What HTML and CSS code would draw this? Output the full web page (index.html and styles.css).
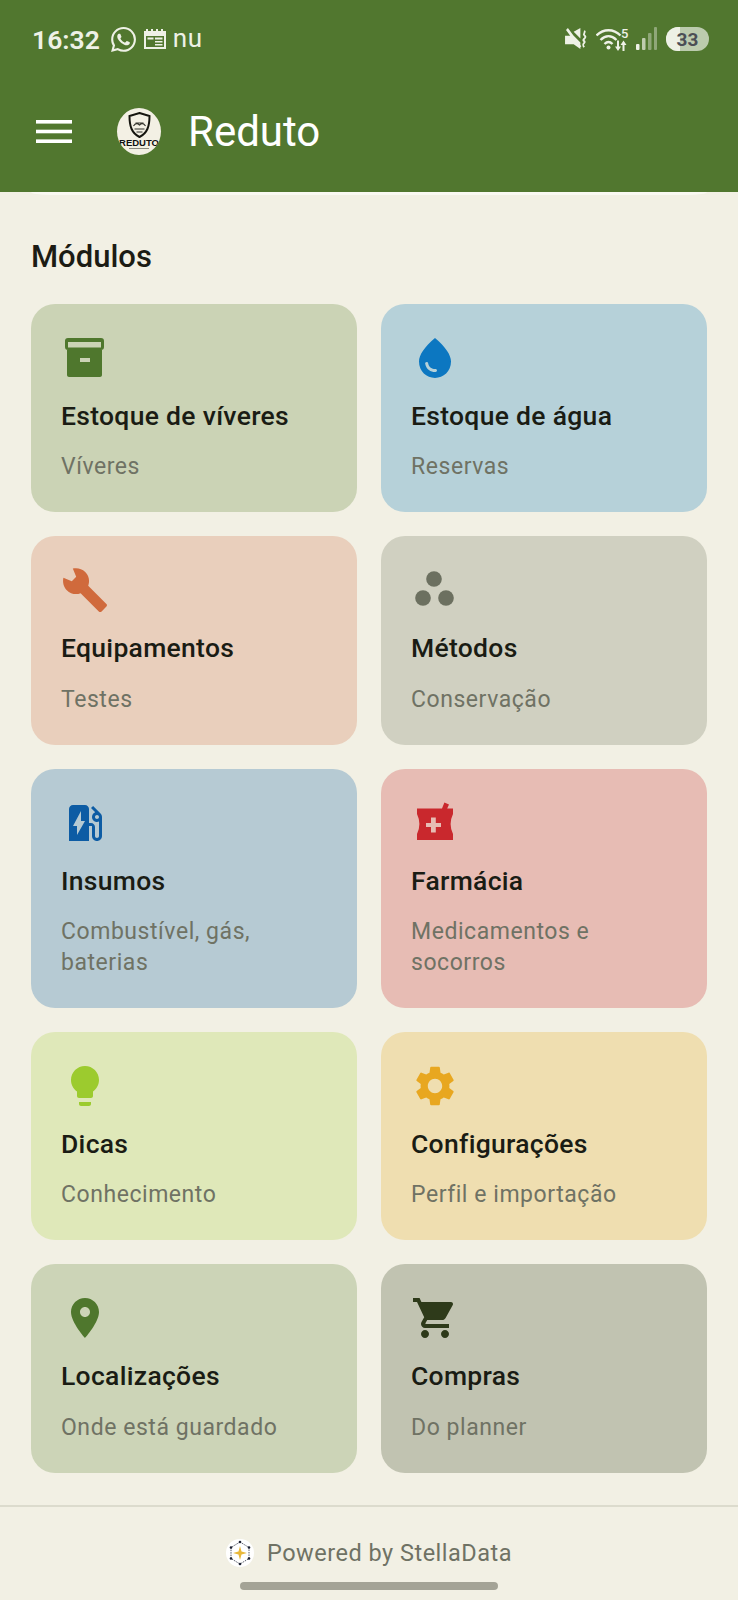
FILE: index.html
```html
<!DOCTYPE html>
<html lang="pt-BR">
<head>
  <meta charset="utf-8">
  <title>Reduto</title>
  <link rel="stylesheet" href="styles.css">
</head>
<body>
  <div class="page">
    <header class="topo">
      <div class="status">
        <div class="status-esq">
          <span class="hora">16:32</span>
          <svg class="ic-whats" viewBox="0 0 24 24"><path d="M17.472 14.382c-.297-.149-1.758-.867-2.03-.967-.273-.099-.471-.148-.67.15-.197.297-.767.966-.94 1.164-.173.199-.347.223-.644.075-.297-.15-1.255-.463-2.39-1.475-.883-.788-1.48-1.761-1.653-2.059-.173-.297-.018-.458.13-.606.134-.133.298-.347.446-.52.149-.174.198-.298.298-.497.099-.198.05-.371-.025-.52-.075-.149-.669-1.612-.916-2.207-.242-.579-.487-.5-.669-.51-.173-.008-.371-.01-.57-.01-.198 0-.52.074-.792.372-.272.297-1.04 1.016-1.04 2.479 0 1.462 1.065 2.875 1.213 3.074.149.198 2.096 3.2 5.077 4.487.709.306 1.262.489 1.694.625.712.227 1.36.195 1.871.118.571-.085 1.758-.719 2.006-1.413.248-.694.248-1.289.173-1.413-.074-.124-.272-.198-.57-.347m-5.421 7.403h-.004a9.87 9.87 0 01-5.031-1.378l-.361-.214-3.741.982.998-3.648-.235-.374a9.86 9.86 0 01-1.51-5.26c.001-5.45 4.436-9.884 9.888-9.884 2.64 0 5.122 1.03 6.988 2.898a9.825 9.825 0 012.893 6.994c-.003 5.45-4.437 9.884-9.885 9.884m8.413-18.297A11.815 11.815 0 0012.05 0C5.495 0 .16 5.335.157 11.892c0 2.096.547 4.142 1.588 5.945L.057 24l6.305-1.654a11.882 11.882 0 005.683 1.448h.005c6.554 0 11.89-5.335 11.893-11.893a11.821 11.821 0 00-3.48-8.413z"/></svg>
          <svg class="ic-cal" viewBox="0 0 22 20"><path fill-rule="evenodd" d="M0 2h2V0h2v2h3V0h2v2h3V0h2v2h3V0h2v2h3v18H0zM2 7v11h18V7z"/><path d="M3.5 8.5h6v2h-6zM11 8.5h7.5v2H11zM11 12h7.5v1.5H11zM11 15h7.5v1.5H11z"/></svg>
          <span class="nu">nu</span>
        </div>
        <div class="status-dir">
          <svg class="ic-mudo" viewBox="0 0 26 24"><path d="M0 8h5l2-2 9 9v7l-7-5H0zM9 4l7-4v11zM1 2l2-2 14 19-2 2z"/><path class="linha" d="M20 3c2 1.5-1.5 3 0 4.5s2 2-.2 4 2 2.2.2 4-1.5 2.5 0 4.5"/></svg>
          <svg class="ic-wifi" viewBox="0 0 34 24"><path class="arco" d="M.5 8.5C7.5 1.5 17.5 1.5 24.5 8.5M4.5 13c5-5 11-5 16 0M8.5 17c2.5-2.5 5.5-2.5 8 0"/><circle cx="12.5" cy="20.5" r="2"/><text x="25" y="11" class="cinco">5</text><path d="M21 13.5h2v6h2l-3 4.5-3-4.5h2zM27.5 13.5l3 4.500h-2v6h-2v-6h-2z"/></svg>
          <svg class="ic-sinal" viewBox="0 0 22 24"><rect x="0" y="17" width="3.5" height="6" rx="1"/><rect class="meio" x="6" y="11" width="3.5" height="12" rx="1"/><rect class="apagado" x="12" y="6" width="3.5" height="17" rx="1"/><rect class="apagado" x="18" y="0" width="3" height="23" rx="1"/></svg>
          <div class="bateria"><div class="bateria-nivel"></div><span class="bateria-num">33</span></div>
        </div>
      </div>
      <div class="appbar">
        <svg class="ic-menu" viewBox="0 0 36 23"><rect y="0" width="36" height="3.6"/><rect y="9.7" width="36" height="3.6"/><rect y="19.4" width="36" height="3.6"/></svg>
        <div class="logo">
          <svg class="logo-escudo" viewBox="0 0 24 26"><path fill="#f3f0e4" stroke="#15150f" stroke-width="2" d="M12 1l10 3c0 10-2 17-10 21C4 21 2 14 2 4z"/><path fill="none" stroke="#33332c" stroke-width="1.2" d="M6 14c2-3 4-3 6-1 2-2 4-2 6 1M7 17h10M9 20h6M8 11h8"/></svg>
          <span class="logo-nome">REDUTO</span>
          <span class="logo-linha"></span>
        </div>
        <span class="titulo">Reduto</span>
      </div>
    </header>
    <div class="resto-card"></div>

    <main class="conteudo">
      <h2 class="secao">Módulos</h2>
      <div class="grade">
        <div class="card c-viveres">
          <svg class="icone" viewBox="0 0 24 24" fill="#4f772d"><path fill-rule="evenodd" d="M3.5 2H20a1.5 1.5 0 0 1 1.5 1.5v3A1.5 1.5 0 0 1 20 8H3.5A1.5 1.5 0 0 1 2 6.5v-3A1.5 1.5 0 0 1 3.5 2zM3.5 4v2.8H20V4zM3 8h17.5v12.5c0 .5-.5 1-1 1H4c-.5 0-1-.5-1-1zM9.5 12v2h5v-2z"/></svg>
          <div class="card-titulo">Estoque de víveres</div>
          <div class="card-sub">Víveres</div>
        </div>
        <div class="card c-agua">
          <svg class="icone" viewBox="0 0 24 24" fill="#0c77c1"><path d="M12 2c-5.33 4.55-8 8.48-8 11.8 0 4.98 3.8 8.2 8 8.2s8-3.22 8-8.2c0-3.32-2.67-7.25-8-11.8zM7.83 14c.37 0 .67.26.74.62.41 2.22 2.28 2.98 3.64 2.87.43-.02.79.32.79.75 0 .4-.32.73-.72.75-2.13.13-4.62-1.09-5.19-4.12-.08-.45.28-.87.74-.87z"/></svg>
          <div class="card-titulo">Estoque de água</div>
          <div class="card-sub">Reservas</div>
        </div>
        <div class="card c-equip">
          <svg class="icone" viewBox="0 0 24 24" fill="#d06a3c"><path d="M22.7 19l-9.1-9.1c.9-2.3.4-5-1.5-6.9-1.7-1.7-4-2.2-6.2-1.7L7.6 5.4 5.4 7.6 1.2 5.9C.7 8.1 1.3 10.5 2.9 12.1c1.9 1.9 4.6 2.4 6.9 1.5l9.1 9.1c.4.4 1 .4 1.4 0l2.3-2.3c.5-.4.5-1.1.1-1.4z"/></svg>
          <div class="card-titulo">Equipamentos</div>
          <div class="card-sub">Testes</div>
        </div>
        <div class="card c-metodos">
          <svg class="icone" viewBox="0 0 24 24" fill="#6c7060"><circle cx="11.5" cy="6.5" r="3.9"/><circle cx="6" cy="16" r="3.9"/><circle cx="17.5" cy="16" r="3.9"/></svg>
          <div class="card-titulo">Métodos</div>
          <div class="card-sub">Conservação</div>
        </div>
        <div class="card c-insumos">
          <svg class="icone" viewBox="0 0 24 24" fill="#0d5ca4"><path d="M19.77 7.23l.01-.01-3.72-3.72L15 4.56l2.11 2.11c-.94.36-1.61 1.26-1.61 2.33 0 1.38 1.12 2.5 2.5 2.5.36 0 .69-.08 1-.21v7.21c0 .55-.45 1-1 1s-1-.45-1-1V14c0-1.1-.9-2-2-2h-1V5c0-1.1-.9-2-2-2H6c-1.1 0-2 .9-2 2v16h10v-7.5h1.5v5c0 1.38 1.12 2.5 2.5 2.5s2.5-1.12 2.5-2.5V9c0-.69-.28-1.32-.73-1.77zM18 10c-.55 0-1-.45-1-1s.45-1 1-1 1 .45 1 1-.45 1-1 1zM8 18v-4.5H6L10 6v5h2l-4 7z"/></svg>
          <div class="card-titulo">Insumos</div>
          <div class="card-sub">Combustível, gás, baterias</div>
        </div>
        <div class="card c-farmacia">
          <svg class="icone" viewBox="0 0 24 24" fill="#c9282d"><path fill-rule="evenodd" d="M3 4.7h12.5l1.2-2.9 2.3.9-.9 2H21v2.8Q18.6 12.5 21 17.5v3H3v-3Q5.4 12.5 3 7.5zM10 9.3V12H7.5v2H10v2.8h2.4V14H15v-2h-2.6V9.3z"/></svg>
          <div class="card-titulo">Farmácia</div>
          <div class="card-sub">Medicamentos e socorros</div>
        </div>
        <div class="card c-dicas">
          <svg class="icone" viewBox="0 0 24 24" fill="#9ccb2e"><path d="M9 21c0 .55.45 1 1 1h4c.55 0 1-.45 1-1v-1H9v1zm3-19C8.14 2 5 5.14 5 9c0 2.38 1.19 4.47 3 5.74V17c0 .55.45 1 1 1h6c.55 0 1-.45 1-1v-2.26c1.81-1.27 3-3.36 3-5.74 0-3.86-3.14-7-7-7z"/></svg>
          <div class="card-titulo">Dicas</div>
          <div class="card-sub">Conhecimento</div>
        </div>
        <div class="card c-config">
          <svg class="icone" viewBox="0 0 24 24" fill="#e8a720"><path d="M19.14 12.94c.04-.3.06-.61.06-.94 0-.32-.02-.64-.07-.94l2.03-1.58c.18-.14.23-.41.12-.61l-1.92-3.32c-.12-.22-.37-.29-.59-.22l-2.39.96c-.5-.38-1.03-.7-1.62-.94L14.4 2.81c-.04-.24-.24-.41-.48-.41h-3.84c-.24 0-.43.17-.47.41L9.25 5.35c-.59.24-1.13.57-1.62.94L5.24 5.33c-.22-.08-.47 0-.59.22L2.74 8.87c-.12.21-.08.47.12.61l2.03 1.58c-.05.3-.09.63-.09.94s.02.64.07.94l-2.03 1.58c-.18.14-.23.41-.12.61l1.92 3.32c.12.22.37.29.59.22l2.39-.96c.5.38 1.03.7 1.62.94l.36 2.54c.05.24.24.41.48.41h3.84c.24 0 .44-.17.47-.41l.36-2.54c.59-.24 1.13-.56 1.62-.94l2.39.96c.22.08.47 0 .59-.22l1.92-3.32c.12-.22.07-.47-.12-.61l-2.01-1.58zM12 15.6c-1.98 0-3.6-1.62-3.6-3.6s1.62-3.6 3.6-3.6 3.6 1.62 3.6 3.6-1.62 3.6-3.6 3.6z"/></svg>
          <div class="card-titulo">Configurações</div>
          <div class="card-sub">Perfil e importação</div>
        </div>
        <div class="card c-local">
          <svg class="icone" viewBox="0 0 24 24" fill="#4f772d"><path d="M12 2C8.13 2 5 5.13 5 9c0 5.25 7 13 7 13s7-7.75 7-13c0-3.87-3.13-7-7-7zm0 9.5c-1.38 0-2.5-1.12-2.5-2.5s1.12-2.5 2.5-2.5 2.5 1.12 2.5 2.5-1.12 2.5-2.5 2.5z"/></svg>
          <div class="card-titulo">Localizações</div>
          <div class="card-sub">Onde está guardado</div>
        </div>
        <div class="card c-compras">
          <svg class="icone" viewBox="0 0 24 24" fill="#2e3a1a"><path d="M7 18c-1.1 0-1.99.9-1.99 2S5.9 22 7 22s2-.9 2-2-.9-2-2-2zM1 2v2h2l3.6 7.59-1.35 2.45c-.16.28-.25.61-.25.96 0 1.1.9 2 2 2h12v-2H7.42c-.14 0-.25-.11-.25-.25l.03-.12.9-1.63h7.45c.75 0 1.41-.41 1.75-1.03l3.58-6.49c.08-.14.12-.31.12-.48 0-.55-.45-1-1-1H5.21l-.94-2H1zm16 16c-1.1 0-1.99.9-1.99 2s.89 2 1.99 2 2-.9 2-2-.9-2-2-2z"/></svg>
          <div class="card-titulo">Compras</div>
          <div class="card-sub">Do planner</div>
        </div>
      </div>
    </main>

    <footer class="rodape">
      <div class="rodape-logo">
        <svg viewBox="0 0 28 28"><path fill="none" stroke="#2b3142" stroke-width=".8" stroke-dasharray="1.5 1" d="M14 3l9 5.5v11L14 25l-9-5.5v-11z"/><path fill="#e9b83a" d="M14 7l1.5 5.5L21 14l-5.5 1.5L14 21l-1.5-5.5L7 14l5.5-1.5z"/><circle cx="14" cy="3" r="1.3" fill="#1d2233"/><circle cx="23" cy="8.5" r="1.3" fill="#1d2233"/><circle cx="23" cy="19.5" r="1.3" fill="#1d2233"/><circle cx="14" cy="25" r="1.3" fill="#1d2233"/><circle cx="5" cy="19.5" r="1.3" fill="#1d2233"/><circle cx="5" cy="8.5" r="1.3" fill="#1d2233"/></svg>
      </div>
      <span class="rodape-texto">Powered by StellaData</span>
      <div class="gesto"></div>
    </footer>
  </div>
</body>
</html>
```
FILE: styles.css
```css
* {
  box-sizing: border-box;
}

body {
  margin: 0;
  background-color: #f2f0e4;
  font-family: Roboto, "Liberation Sans", sans-serif;
}

.page {
  position: relative;
  display: flex;
  flex-direction: column;
  height: 1600px;
  overflow: hidden;
}

/* barra verde */
.topo {
  height: 192px;
  background-color: #51772f;
  color: #fff;
}

.status {
  display: flex;
  justify-content: space-between;
  align-items: center;
  height: 78px;
  padding: 0 29px 0 32px;
  color: #eef1e6;
  fill: #eef1e6;
}

.status-esq,
.status-dir {
  display: flex;
  align-items: center;
}

.hora {
  font-size: 26.5px;
  font-weight: 600;
}

.ic-whats {
  width: 25px;
  height: 25px;
  margin-left: 11px;
}

.ic-cal {
  width: 22px;
  height: 20px;
  margin-left: 8px;
}

.nu {
  margin-left: 7px;
  font-size: 26px;
  line-height: 26px;
  letter-spacing: 0.5px;
  position: relative;
  top: -1px;
}

.ic-mudo {
  width: 25px;
  height: 23px;
}

.linha {
  fill: none;
  stroke: #eef1e6;
  stroke-width: 2;
}

.ic-wifi {
  width: 34px;
  height: 24px;
  margin-left: 6px;
}

.arco {
  fill: none;
  stroke: #eef1e6;
  stroke-width: 2.4;
}

.cinco {
  font-size: 13px;
  font-weight: 500;
}

.ic-sinal {
  width: 22px;
  height: 24px;
  margin-left: 6px;
}

.meio {
  opacity: 0.7;
}

.apagado {
  opacity: 0.4;
}

.bateria {
  position: relative;
  display: flex;
  align-items: center;
  justify-content: center;
  width: 43px;
  height: 24px;
  margin-left: 8px;
  border-radius: 12px;
  background-color: #bccbae;
  overflow: hidden;
}

.bateria-nivel {
  position: absolute;
  left: 0;
  top: 0;
  bottom: 0;
  width: 33%;
  background-color: #eef1e6;
}

.bateria-num {
  position: relative;
  color: #4b4e55;
  font-size: 19px;
  font-weight: 700;
}

.appbar {
  display: flex;
  align-items: center;
  height: 106px;
  padding-left: 36px;
}

.ic-menu {
  width: 36px;
  height: 23px;
  fill: #fff;
}

.logo {
  display: flex;
  flex-direction: column;
  align-items: center;
  width: 44px;
  height: 47px;
  margin-left: 45px;
  padding-top: 4px;
  border-radius: 50%;
  background-color: #f3f0e4;
  overflow: hidden;
}

.logo-escudo {
  width: 25px;
  height: 26px;
  flex: none;
}

.logo-nome {
  color: #111;
  font-family: "Liberation Sans", sans-serif;
  font-size: 9.5px;
  font-weight: 700;
  line-height: 10px;
}

.logo-linha {
  width: 20px;
  height: 1px;
  background-color: #8a8a80;
}

.titulo {
  margin-left: 27px;
  font-size: 42px;
}

.resto-card {
  height: 3px;
  margin: 0 31px;
  background-color: #faf9f2;
  border-radius: 0 0 20px 20px / 0 0 3px 3px;
}

/* modulos */
.conteudo {
  flex: 1;
  padding: 43px 31px 0;
}

.secao {
  margin: 0 0 27.5px;
  color: #1c1c14;
  font-size: 31px;
  font-weight: 480;
  line-height: 38px;
}

.grade {
  display: grid;
  grid-template-columns: 1fr 1fr;
  gap: 24px;
}

.card {
  padding: 30px 30px 29.5px;
  border-radius: 24px;
}

.icone {
  display: block;
  width: 48px;
  height: 48px;
  margin-bottom: 16px;
}

.card-titulo {
  margin-bottom: 18.5px;
  color: #1a1c14;
  font-size: 26.5px;
  font-weight: 480;
  line-height: 36px;
  letter-spacing: 0.3px;
}

.card-sub {
  color: #6f7264;
  font-size: 23px;
  line-height: 30.5px;
  letter-spacing: 0.55px;
}

.c-viveres { background-color: #cbd3b5; }
.c-agua { background-color: #b6d1d9; }
.c-equip { background-color: #e9cfbc; }
.c-metodos { background-color: #d0d0c1; }
.c-insumos { background-color: #b6cad3; }
.c-farmacia { background-color: #e7bcb4; }
.c-dicas { background-color: #dfe8b9; }
.c-config { background-color: #efdeb0; }
.c-local { background-color: #ccd4b7; }
.c-compras { background-color: #c1c3b1; }

/* rodape */
.rodape {
  position: relative;
  display: flex;
  justify-content: center;
  align-items: center;
  height: 95px;
  padding-bottom: 1px;
  border-top: 2px solid #dcdbcd;
}

.rodape-logo {
  width: 28px;
  height: 28px;
  border-radius: 50%;
  background-color: #fff;
}

.rodape-logo svg {
  display: block;
  width: 28px;
  height: 28px;
}

.rodape-texto {
  margin-left: 13px;
  color: #6f7264;
  font-size: 23.5px;
  letter-spacing: 0.5px;
}

.gesto {
  position: absolute;
  left: 240px;
  bottom: 10px;
  width: 258px;
  height: 8px;
  border-radius: 4px;
  background-color: #a4a396;
}
```
